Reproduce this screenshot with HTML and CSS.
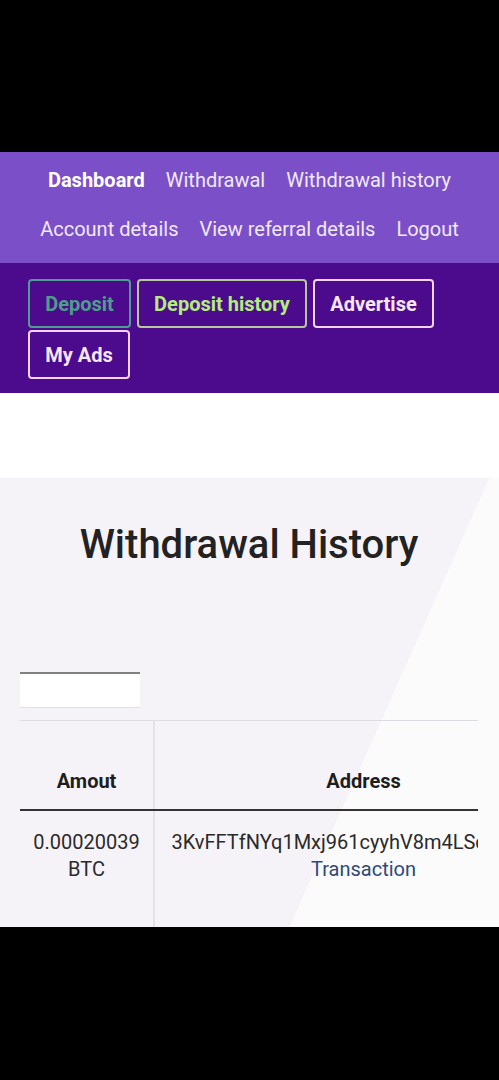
FILE: index.html
```html
<!DOCTYPE html>
<html lang="en">
<head>
    <meta charset="UTF-8">
    <meta name="viewport" content="width=device-width, initial-scale=1.0">
    <title>Withdrawal History</title>
    <link rel="stylesheet" href="styles.css">
</head>
<body>
    <div class="screen">
        <nav class="top-nav">
            <div class="nav-row">
                <a href="#" class="active">Dashboard</a>
                <a href="#">Withdrawal</a>
                <a href="#">Withdrawal history</a>
            </div>
            <div class="nav-row">
                <a href="#">Account details</a>
                <a href="#">View referral details</a>
                <a href="#">Logout</a>
            </div>
        </nav>
        <div class="sub-nav">
            <a href="#" class="btn btn-deposit">Deposit</a>
            <a href="#" class="btn btn-history">Deposit history</a>
            <a href="#" class="btn btn-plain">Advertise</a>
            <a href="#" class="btn btn-plain">My Ads</a>
        </div>
        <div class="spacer"></div>
        <main class="panel">
            <h2>Withdrawal History</h2>
            <input type="text" class="search">
            <div class="table-wrap">
                <table>
                    <thead>
                        <tr>
                            <th class="col-amount">Amout</th>
                            <th class="col-address">Address</th>
                        </tr>
                    </thead>
                    <tbody>
                        <tr>
                            <td class="col-amount">0.00020039<br>BTC</td>
                            <td class="col-address">3KvFFTfNYq1Mxj961cyyhV8m4LSc7rQwDz<br><a href="#">Transaction</a></td>
                        </tr>
                    </tbody>
                </table>
            </div>
        </main>
    </div>
</body>
</html>
```

FILE: styles.css
```css
body {
    margin: 0;
    padding: 0;
    background: #000;
    font-family: Roboto, "Noto Sans", sans-serif;
}

.screen {
    margin-top: 152px;
    height: 775px;
    overflow: hidden;
    background: #fff;
}

.top-nav {
    background-color: #7b4fc7;
    height: 111px;
    padding-top: 3px;
    box-sizing: border-box;
}

.nav-row {
    display: flex;
    justify-content: center;
    gap: 21px;
    height: 49px;
    align-items: center;
}

.nav-row a {
    color: #f1e9fb;
    text-decoration: none;
    font-size: 20px;
}

.nav-row a.active {
    font-weight: 700;
    color: #fff;
}

.sub-nav {
    background-color: #4b0b8c;
    height: 130px;
    box-sizing: border-box;
    padding: 16px 28px 0 28px;
    display: flex;
    flex-wrap: wrap;
    align-content: flex-start;
    column-gap: 6px;
    row-gap: 2px;
}

.btn {
    display: flex;
    align-items: center;
    justify-content: center;
    height: 49px;
    box-sizing: border-box;
    border: 2px solid #f2d4f2;
    border-radius: 4px;
    font-size: 20px;
    font-weight: 700;
    text-decoration: none;
    color: #f7e6f5;
}

.btn-deposit {
    width: 103px;
    border-color: #4f9c92;
    color: #4c9f8b;
}

.btn-history {
    width: 170px;
    border-color: #b9c7a0;
    color: #b3ee7c;
}

.btn-plain {
    width: 121px;
}

.btn-plain:last-child {
    width: 102px;
}

.spacer {
    height: 85px;
    background: #fff;
}

.panel {
    height: 449px;
    box-sizing: border-box;
    padding: 45px 21px 0 20px;
    background: linear-gradient(114deg, #f6f3f8 447px, #fbfbfc 447px);
}

h2 {
    margin: 0;
    text-align: center;
    font-size: 40px;
    font-weight: 500;
    line-height: 44px;
    color: #222;
}

.search {
    display: block;
    margin-top: 105px;
    width: 120px;
    height: 36px;
    box-sizing: border-box;
    border: none;
    border-top: 2px solid #808080;
    border-bottom: 1px solid #e2e0e4;
    background: #fff;
}

.table-wrap {
    margin-top: 12px;
    overflow: hidden;
    border-top: 1px solid #dedce0;
}

table {
    border-collapse: collapse;
    width: 552px;
}

th, td {
    text-align: center;
    font-size: 20px;
    color: #2a2a2a;
}

th {
    height: 72px;
    vertical-align: bottom;
    padding: 0 0 16px 0;
    font-weight: 700;
    border-bottom: 2px solid #333;
    color: #1e1e1e;
}

td {
    vertical-align: top;
    padding: 18px 0 48px 0;
    line-height: 27px;
    white-space: nowrap;
}

.col-amount {
    width: 134px;
    border-right: 2px solid #e4e2e6;
}

.col-address {
    width: 418px;
}

td a {
    color: #2e4a78;
    text-decoration: none;
}
```
